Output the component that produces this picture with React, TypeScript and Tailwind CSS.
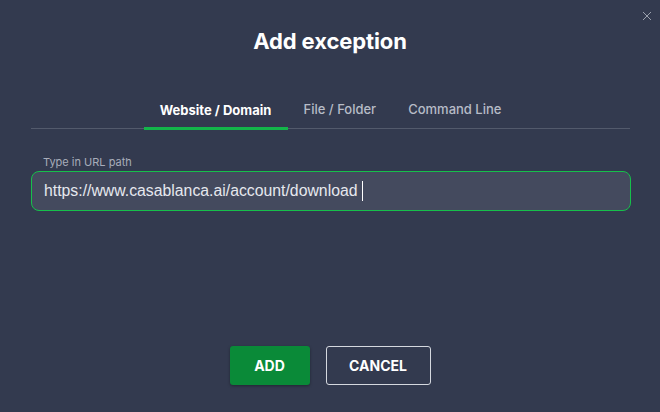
import React, { useState } from 'react';

const tabs = ['Website / Domain', 'File / Folder', 'Command Line'];

export default function App() {
  const [active, setActive] = useState(0);
  const url = 'https://www.casablanca.ai/account/download';

  return (
    <div
      className="relative flex h-[412px] w-[660px] flex-col bg-[#333a4f] text-white"
      style={{ fontFamily: 'Inter, "Liberation Sans", sans-serif' }}
    >
      {/* close button */}
      <button className="absolute right-[7px] top-[10px] p-[1px] text-[#9aa0ad]">
        <svg width="10" height="10" viewBox="0 0 10 10" stroke="currentColor" strokeWidth="1">
          <path d="M1 1 L9 9 M9 1 L1 9" />
        </svg>
      </button>

      <h1 className="mt-[27px] text-center text-[22px] font-bold leading-[28px] tracking-[-0.1px]">Add exception</h1>

      <div className="ml-[31px] mr-[30px] mt-[45px] flex justify-center border-b border-[#535a6c]">
        {tabs.map((t, i) => (
          <button
            key={t}
            onClick={() => setActive(i)}
            className={
              i === active
                ? '-mb-[2px] w-[144px] border-b-[3px] border-[#13b54a] pb-[6px] text-[13px] font-bold text-white'
                : 'px-[16px] pb-[8px] text-[13px] font-medium text-[#b7bcc7]'
            }
          >
            {t}
          </button>
        ))}
      </div>

      <label className="mx-[43px] mt-[25px] text-[11px] text-[#a8adba]">Type in URL path</label>
      <div className="ml-[31px] mr-[29px] mt-[1px] flex h-[40px] items-center rounded-[8px] border border-[#16c04b] bg-[#444a5e] px-[12px]">
        <span
          className="text-[15.8px] leading-[20px] text-[#e6e8ee]"
          style={{ fontFamily: '"Liberation Sans", Arial, sans-serif' }}
        >
          {url}
        </span>
        <span className="ml-[4px] h-[20px] w-[1px] bg-white" />
      </div>

      <div className="mt-auto mb-[27px] flex justify-center gap-[16px]">
        <button className="h-[39px] w-[80px] rounded-[3px] bg-[#0a8a38] text-[14px] font-bold text-white shadow-[0_1px_3px_rgba(0,0,0,0.35)]">
          ADD
        </button>
        <button className="h-[39px] w-[105px] rounded-[3px] border border-[#d5d8df] text-[14px] font-bold text-white">
          CANCEL
        </button>
      </div>
    </div>
  );
}
